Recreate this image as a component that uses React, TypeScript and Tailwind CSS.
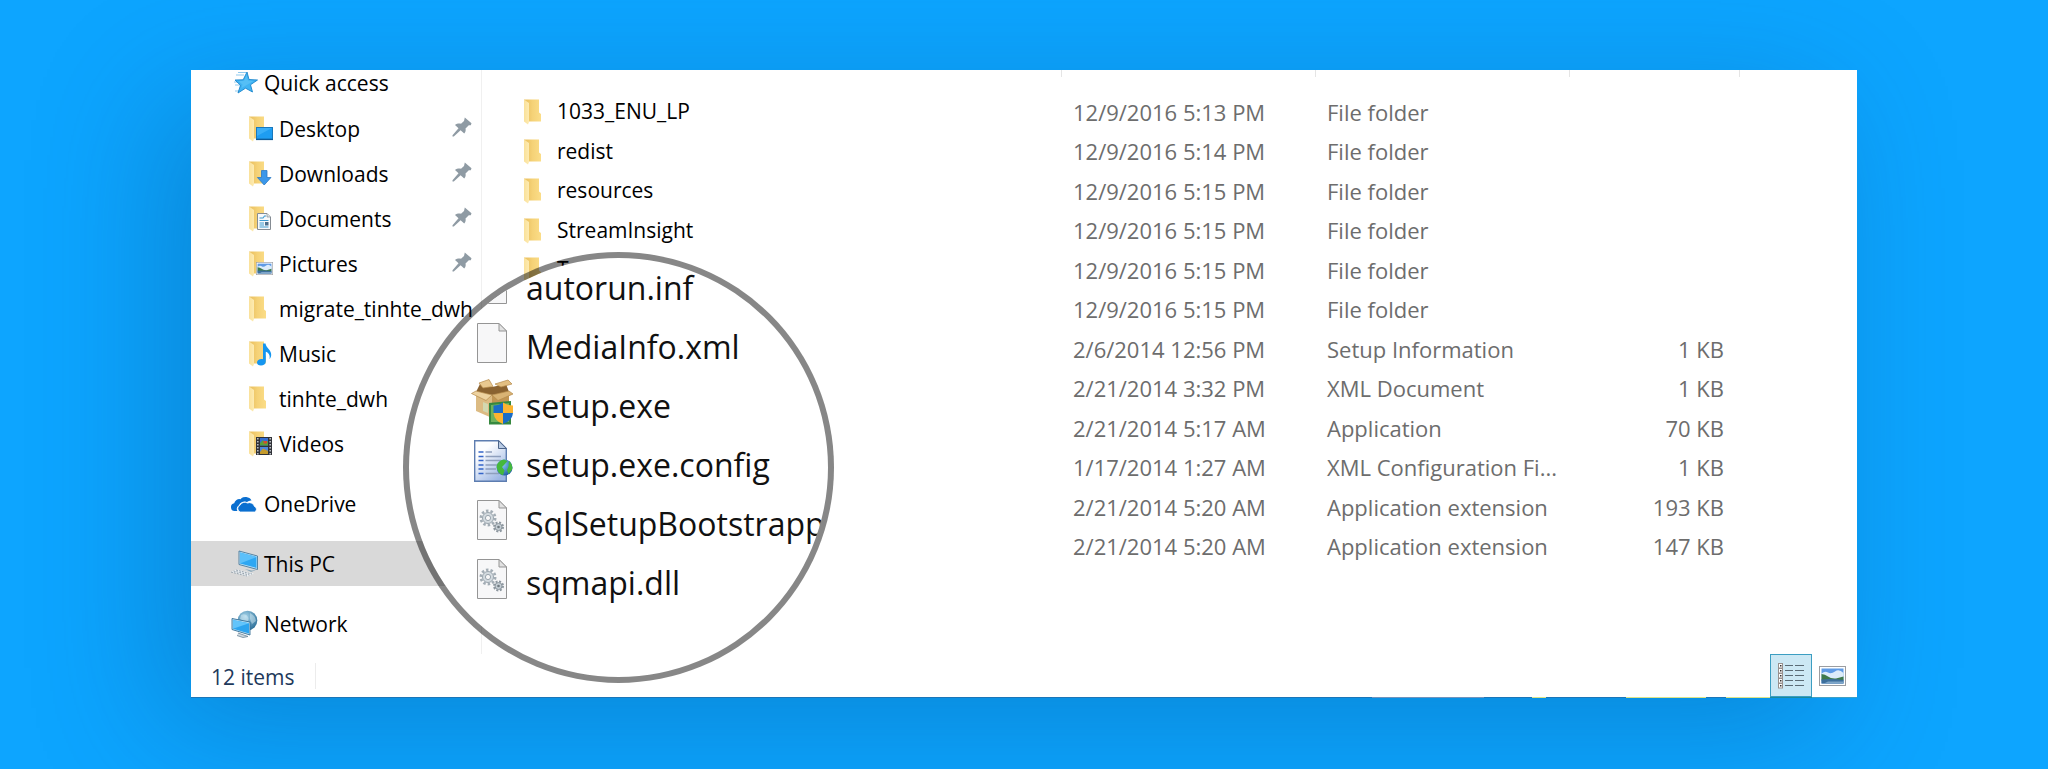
import type { ReactNode } from "react";

/* ---------- Icons ---------- */

function Folder({ children }: { children?: ReactNode }) {
  return (
    <svg viewBox="0 0 24 26" className="h-[26px] w-6 shrink-0" aria-hidden="true">
      <defs>
        <linearGradient id="folderBack" x1="0" x2="1">
          <stop offset="0.2" stopColor="#edc566" />
          <stop offset="0.5" stopColor="#f5d277" />
          <stop offset="1" stopColor="#fbdd88" />
        </linearGradient>
        <linearGradient id="folderFlap" x1="0" x2="1">
          <stop offset="0" stopColor="#fae19a" />
          <stop offset="1" stopColor="#fdebb2" />
        </linearGradient>
      </defs>
      <path d="M0 0.5H15V13.5L17 15V22.5H4Z" fill="url(#folderBack)" />
      <path d="M0 0.5L5 4V23L4 25.5L0 22.5Z" fill="url(#folderFlap)" />
      {children}
    </svg>
  );
}

const DesktopIcon = () => (
  <Folder>
    <rect x="7.5" y="11.5" width="16" height="11.5" fill="#1e9df2" stroke="#1878bd" />
    <path d="M8 12H23L8 20Z" fill="#4bb9fb" opacity="0.6" />
    <path d="M7 23.5H24" stroke="#0d5c9b" strokeWidth="1.2" />
  </Folder>
);

const DownloadsIcon = () => (
  <Folder>
    <path d="M12.5 9.500H18V16.5H22L15.2 24L8.4 16.5H12.5Z" fill="#3b97ea" stroke="#2b79c4" strokeWidth="0.8" />
  </Folder>
);

const DocumentsIcon = () => (
  <Folder>
    <path d="M8.5 7.5H18L21.5 11V23.5H8.5Z" fill="#f7f9fb" stroke="#858c93" />
    <path d="M18 7.5V11H21.5" fill="#dfe4e8" stroke="#858c93" strokeWidth="0.7" />
    <path d="M10.500 12H14L15.500 10H17M10.500 14.500H19.500M10.500 17H15M10.500 19H15M10.500 21H19.500" stroke="#3f9bd0" strokeWidth="1.1" fill="none" />
    <rect x="16" y="16" width="3.500" height="3.500" fill="#4c6f8c" />
  </Folder>
);

const Landscape = () => (
  <>
    <rect x="0.5" y="0.5" width="26" height="19" fill="#fff" stroke="#9b9da1" />
    <rect x="2.5" y="2.5" width="22" height="15" fill="#5f9be6" />
    <path d="M2.500 7.500Q6 4.500 9 6.500T16 5.500T24.500 7V13H2.500Z" fill="#dcecfa" />
    <path d="M2.500 8Q6 8 9 10.500T17 12.500L24.500 10.500V14.500H2.500Z" fill="#3f7a4c" />
    <path d="M2.500 13.500Q12 12.500 24.500 14V17.500H2.500Z" fill="#3d6f9c" />
    <path d="M9 15.500H24.500V17.500H5Z" fill="#7fa6c8" />
  </>
);

const PicturesIcon = () => (
  <Folder>
    <svg x="7" y="11" width="17" height="13" viewBox="0 0 27 20" preserveAspectRatio="none">
      <Landscape />
    </svg>
  </Folder>
);

const MusicIcon = () => (
  <Folder>
    <path
      d="M14 2.500H16.500C17 7 22.500 9 22.200 14C22.100 16 21.200 17.500 20.500 18C21.500 13.500 19 11.500 16.800 10.800V20.500C16.800 23 14.500 24.500 12 24.500C9.500 24.500 8 23.300 8 21.500C8 19.400 10.200 18 12.500 18C13.100 18 13.600 18.100 14 18.200Z"
      fill="#1596f0"
    />
  </Folder>
);

const VideosIcon = () => (
  <Folder>
    <rect x="7" y="6" width="16" height="18" fill="#303238" />
    <path d="M8.800 7V24M21.200 7V24" stroke="#b9bdc4" strokeWidth="1.600" strokeDasharray="1.500 1.500" />
    <rect x="11" y="7" width="8" height="7.500" fill="#376fd0" />
    <path d="M11 12L14 9L16 12L19 10V14.500H11Z" fill="#58a13a" />
    <rect x="14.500" y="10" width="3.500" height="2.500" fill="#d64c2c" />
    <rect x="11" y="16" width="8" height="7" fill="#4d86dd" />
    <path d="M11 21L14 17.500L19 20V23H11Z" fill="#c59b2c" />
  </Folder>
);

const Pin = () => (
  <svg viewBox="0 0 20 20" className="mb-1 size-5" aria-hidden="true">
    <path
      d="M12.800 0.500L19.500 6.300L18.800 8.200L16.800 8.200L13.500 11.500C14 13.500 13.500 15.200 12.200 16.600L8.600 13.300L1.800 19.500H0.500V18.200L6.500 11.200L3 8C4.800 6.500 7 6.200 9 6.700L12 4Z"
      fill="#8f9ba4"
    />
  </svg>
);

const StarIcon = () => (
  <svg viewBox="0 0 28 26" className="h-[26px] w-7 shrink-0" aria-hidden="true">
    <path d="M8 2.500H16M6 5H14M4 12H10M5 15H12M5 21H9" stroke="#8fc9ee" strokeWidth="1.100" />
    <path
      d="M17 2L19 9.500L27.500 10L20.500 14.800L22.500 22L15.500 18.200L8 23L10.500 15.300L5 10L13.200 9.800Z"
      fill="#3fb3f3"
      stroke="#1c86cc"
      strokeWidth="0.900"
    />
    <path d="M16.500 5L18 10.500L23.500 11L15 16L11.500 18L12.500 14.500L8.500 11.200L14 10.800Z" fill="#6bcbfa" opacity="0.500" />
  </svg>
);

const OneDriveIcon = () => (
  <svg viewBox="0 0 28 20" className="h-5 w-7 shrink-0" aria-hidden="true">
    <path
      d="M7.500 17H4.500A3.800 3.800 0 0 1 1 13.200A3.900 3.900 0 0 1 4.200 9.300A5.200 5.200 0 0 1 10.500 5.200A6.700 6.700 0 0 1 21.500 6.500A6 6 0 0 0 17 8A6.200 6.200 0 0 0 8.700 11.600A4 4 0 0 0 7.500 17Z"
      fill="#0a6fd0"
    />
    <path
      d="M10.500 18A3.500 3.500 0 0 1 10 11.300A5.300 5.300 0 0 1 17.500 9A5.300 5.300 0 0 1 24.500 12.500A2.900 2.900 0 0 1 24.500 18Z"
      fill="#0a6fd0"
      stroke="#fff"
      strokeWidth="0.800"
    />
  </svg>
);

const PcIcon = () => (
  <svg viewBox="0 0 28 28" className="size-7 shrink-0" aria-hidden="true">
    <path d="M9 1L27.500 6V19.500L9 14.500Z" fill="#bfe3f8" stroke="#48799b" strokeWidth="0.900" />
    <path d="M10 2.500L26.500 7V18L10 13.500Z" fill="#2ea7f2" />
    <path d="M10 2.500L26.500 7L10 13.500Z" fill="#5cc0fa" />
    <path d="M15 19L22 20.500L27 19.500L21 22Z" fill="#8faabb" />
    <path d="M7 19.500L24 23.500L17 26.500L0.500 21.800Z" fill="#eef2f5" />
    <path d="M6 20L22 24M3.500 21L19.500 25M1 22L17 26" stroke="#8c9aa5" strokeWidth="0.900" strokeDasharray="2 1" />
  </svg>
);

const NetworkIcon = () => (
  <svg viewBox="0 0 28 28" className="size-7 shrink-0" aria-hidden="true">
    <defs>
      <radialGradient id="globe" cx="0.400" cy="0.300" r="0.800">
        <stop offset="0" stopColor="#a5d4ea" />
        <stop offset="1" stopColor="#1f6490" />
      </radialGradient>
    </defs>
    <circle cx="17.500" cy="10.500" r="9.800" fill="url(#globe)" />
    <path d="M11 5Q16 3 18 7T15 12L10 9ZM20 3Q26 6 26 11L22 14L20 9Z" fill="#e1f2f8" opacity="0.450" />
    <path d="M2 8.500L20 12V25L2 19.500Z" fill="#b7dff5" stroke="#356f97" strokeWidth="0.900" />
    <path d="M3 10L19 13.200V23.500L3 18.700Z" fill="#2ca4ef" />
    <path d="M3 10L19 13.200L3 18.700Z" fill="#62c4fb" />
    <path d="M8 23L18 26.500L13 27.500L7 25.500" fill="#ced8df" stroke="#6d8798" strokeWidth="0.800" />
  </svg>
);

const PageShape = () => (
  <>
    <path d="M6.500 0.500H28L35.500 8V39.500H6.500Z" fill="#f7f7f8" stroke="#959595" />
    <path d="M28 0.500V8H35.500Z" fill="#e2e2e2" stroke="#959595" />
  </>
);

const PageIcon = () => (
  <svg viewBox="0 0 42 40" className="h-10 w-[42px] shrink-0" aria-hidden="true">
    <PageShape />
  </svg>
);

const GearsIcon = () => (
  <svg viewBox="0 0 42 40" className="h-10 w-[42px] shrink-0" aria-hidden="true">
    <PageShape />
    <circle cx="17" cy="18" r="7.200" fill="none" stroke="#a3adb5" strokeWidth="2.600" strokeDasharray="2.500 2.025" />
    <circle cx="17" cy="18" r="5.500" fill="#d3dadf" stroke="#9aa5ae" />
    <circle cx="17" cy="18" r="2.600" fill="#f7f7f8" stroke="#9aa5ae" />
    <circle cx="27.500" cy="27" r="4.500" fill="none" stroke="#8d979f" strokeWidth="2" strokeDasharray="2 1.534" />
    <circle cx="27.500" cy="27" r="3.500" fill="#c3ccd2" stroke="#8d979f" />
    <circle cx="27.500" cy="27" r="1.300" fill="#6f7980" />
  </svg>
);

const ConfigIcon = () => (
  <svg viewBox="0 0 42 42" className="h-[42px] w-[42px] shrink-0" aria-hidden="true">
    <defs>
      <linearGradient id="configPage" x1="0" y1="0" x2="0.700" y2="1">
        <stop offset="0.300" stopColor="#fdfeff" />
        <stop offset="1" stopColor="#9cb6e4" />
      </linearGradient>
      <radialGradient id="earth" cx="0.350" cy="0.300" r="0.800">
        <stop offset="0" stopColor="#8fd0f5" />
        <stop offset="1" stopColor="#17529f" />
      </radialGradient>
    </defs>
    <path d="M3.700 0.700H27.500L35.300 8.500V41.300H3.700Z" fill="url(#configPage)" stroke="#5d7db0" strokeWidth="1.400" />
    <path d="M27.500 0.700V8.500H35.300Z" fill="#b9cbe4" stroke="#4c6488" />
    <path d="M7.500 12H12.500M7.500 16.500H12.500M7.500 20.500H12.500M7.500 25H12.500M7.500 29H12.500M7.500 33.500H12.500" stroke="#3465c9" strokeWidth="1.700" />
    <path d="M14.500 12H21M14.500 16.500H30M14.500 20.500H30M14.500 25H28M14.500 29H25M14.500 33.500H28" stroke="#8e9fbd" strokeWidth="1.300" />
    <circle cx="33.500" cy="27.500" r="8" fill="url(#earth)" />
    <path d="M25.600 26Q27 20.500 33 19.500L36.500 21L33 25L31 27L33.500 30.500L32 35.300Q26 33.500 25.600 26ZM38 21Q41.500 24 41.400 29L37.500 34L36 30L37.500 26.500Z" fill="#45b83c" />
  </svg>
);

const SetupIcon = () => (
  <svg viewBox="0 0 42 46" className="h-[46px] w-[42px] shrink-0" aria-hidden="true">
    <defs>
      <clipPath id="shield">
        <path d="M32 23.500Q36.500 26.500 42 26.500V34Q41 42 32 45Q23.500 42 22.500 34V26.500Q28 26.500 32 23.500Z" />
      </clipPath>
    </defs>
    <path d="M5 13L21 16V39L5 32Z" fill="#dcbb83" />
    <path d="M21 16L38 13V33L21 39Z" fill="#c19553" />
    <path d="M9 5L21 8L35 5L38 13L21 16L5 13Z" fill="#8a6230" />
    <path d="M8 4L18 0.500L22 7.500L12 9Z" fill="#e8c890" stroke="#b58a4b" strokeWidth="0.700" />
    <path d="M24 5L37 1L41 5L30 8Z" fill="#e3bf82" stroke="#b58a4b" strokeWidth="0.700" />
    <path d="M5 12L0.500 14.500L15 21.500L21 16Z" fill="#edd2a0" stroke="#b58a4b" strokeWidth="0.700" />
    <path d="M21 16L38 12L42 15L27 21.500Z" fill="#d9b374" stroke="#b58a4b" strokeWidth="0.700" />
    <path d="M12 23L17 25V34L12 32Z" fill="#d3d8b0" />
    <path d="M18 24L40 22V45.500H18Z" fill="#36883f" />
    <path d="M20 26L38 24V43H20Z" fill="#6fb25c" />
    <g clipPath="url(#shield)">
      <rect x="22" y="23" width="10" height="11" fill="#1b6dc7" />
      <rect x="32" y="23" width="10" height="11" fill="#fcb431" />
      <rect x="22" y="34" width="10" height="12" fill="#fcb431" />
      <rect x="32" y="34" width="10" height="12" fill="#1b6dc7" />
    </g>
  </svg>
);

const DetailsIcon = () => (
  <svg viewBox="0 0 28 26" className="h-[26px] w-7" aria-hidden="true">
    {[0, 5, 10, 15, 20].map((y) => (
      <g key={y}>
        <rect x="1.500" y={y + 0.500} width="4" height="4.500" fill="#fff" stroke="#98908d" />
        <rect x="3" y={y + 2} width="1.500" height="1.500" fill="#342e2e" />
        <path d={`M8 ${y + 2.500}H16M18 ${y + 2.500}H27`} stroke="#5b6b75" strokeWidth="1.200" />
      </g>
    ))}
  </svg>
);

/* ---------- Data ---------- */

const quickAccess = [
  { name: "Desktop", icon: <DesktopIcon />, pinned: true },
  { name: "Downloads", icon: <DownloadsIcon />, pinned: true },
  { name: "Documents", icon: <DocumentsIcon />, pinned: true },
  { name: "Pictures", icon: <PicturesIcon />, pinned: true },
  { name: "migrate_tinhte_dwh", icon: <Folder />, pinned: false },
  { name: "Music", icon: <MusicIcon />, pinned: false },
  { name: "tinhte_dwh", icon: <Folder />, pinned: false },
  { name: "Videos", icon: <VideosIcon />, pinned: false },
];

const roots = [
  { name: "OneDrive", icon: <OneDriveIcon />, selected: false },
  { name: "This PC", icon: <PcIcon />, selected: true },
  { name: "Network", icon: <NetworkIcon />, selected: false },
];

const files = [
  ["1033_ENU_LP", "12/9/2016 5:13 PM", "File folder", ""],
  ["redist", "12/9/2016 5:14 PM", "File folder", ""],
  ["resources", "12/9/2016 5:15 PM", "File folder", ""],
  ["StreamInsight", "12/9/2016 5:15 PM", "File folder", ""],
  ["Tools", "12/9/2016 5:15 PM", "File folder", ""],
  ["", "12/9/2016 5:15 PM", "File folder", ""],
  ["", "2/6/2014 12:56 PM", "Setup Information", "1 KB"],
  ["", "2/21/2014 3:32 PM", "XML Document", "1 KB"],
  ["", "2/21/2014 5:17 AM", "Application", "70 KB"],
  ["", "1/17/2014 1:27 AM", "XML Configuration Fi...", "1 KB"],
  ["", "2/21/2014 5:20 AM", "Application extension", "193 KB"],
  ["", "2/21/2014 5:20 AM", "Application extension", "147 KB"],
];

const magnified = [
  { name: "autorun.inf", icon: <PageIcon /> },
  { name: "MediaInfo.xml", icon: <PageIcon /> },
  { name: "setup.exe", icon: <SetupIcon /> },
  { name: "setup.exe.config", icon: <ConfigIcon /> },
  { name: "SqlSetupBootstrapper.dll", icon: <GearsIcon /> },
  { name: "sqmapi.dll", icon: <GearsIcon /> },
];

/* ---------- Sections ---------- */

function Sidebar() {
  return (
    <nav className="w-[291px] shrink-0 border-r border-[#f0f0f0] pb-2 whitespace-nowrap">
      <a href="#quick" className="flex h-9 items-start gap-1.5 pl-[39px] leading-[26px]">
        <StarIcon />
        Quick access
      </a>
      <ul>
        {quickAccess.map((item) => (
          <li key={item.name} className="flex h-[45px] items-center justify-between pr-[9px] pl-[58px]">
            <a href={`#${item.name}`} className="flex items-center gap-1.5">
              {item.icon}
              <span className="pt-0.5">{item.name}</span>
            </a>
            {item.pinned && <Pin />}
          </li>
        ))}
      </ul>
      <ul className="mt-[15px] flex flex-col gap-[15px]">
        {roots.map((item) => (
          <li key={item.name} className={item.selected ? "bg-[#d9d9d9]" : ""}>
            <a href={`#${item.name}`} className="flex h-[45px] items-center gap-1.5 pl-[39px]">
              {item.icon}
              <span className="pt-[3px]">{item.name}</span>
            </a>
          </li>
        ))}
      </ul>
    </nav>
  );
}

function FileTable() {
  return (
    <div className="min-w-0 flex-1">
      <table className="w-full table-fixed border-collapse text-left text-[22px] whitespace-nowrap text-[#6d6d6d]">
        <thead>
          <tr className="h-[22px] align-top">
            <th aria-label="Name" className="p-0"><div className="h-[7px] border-r border-[#e5e5e5]" /></th>
            <th aria-label="Date modified" className="w-[254px] p-0"><div className="h-[7px] border-r border-[#e5e5e5]" /></th>
            <th aria-label="Type" className="w-[254px] p-0"><div className="h-[7px] border-r border-[#e5e5e5]" /></th>
            <th aria-label="Size" className="w-[170px] p-0"><div className="h-[7px] border-r border-[#e5e5e5]" /></th>
            <td className="w-[117px] p-0" />
          </tr>
        </thead>
        <tbody>
          {files.map(([name, date, type, size], i) => (
            <tr key={i} className="odd:h-10 even:h-[39px]">
              <td className="p-0 pl-[42px] text-[21px] text-black">
                {name && (
                  <div className="flex items-center gap-[9px]">
                    <Folder />
                    {name}
                  </div>
                )}
              </td>
              <td className="p-0 pl-[11px]">{date}</td>
              <td className="p-0 pl-[11px]">{type}</td>
              <td className="p-0 pr-4 text-right">{size}</td>
              <td className="p-0" />
            </tr>
          ))}
        </tbody>
      </table>
    </div>
  );
}

function Lens() {
  return (
    <div className="absolute top-[182px] left-[212px] size-[431px] overflow-hidden rounded-full border-6 border-black/47 bg-white bg-clip-padding">
      <ul className="flex flex-col gap-[19px] pt-1.5 pl-[62px] text-[32px] leading-10 whitespace-nowrap text-[#111]">
        {magnified.map((item) => (
          <li key={item.name} className="flex h-10 items-center gap-[13px]">
            {item.icon}
            <span className="pt-2">{item.name}</span>
          </li>
        ))}
      </ul>
    </div>
  );
}

function StatusBar() {
  return (
    <footer className="flex h-[43px] items-center justify-between pl-5">
      <span className="border-r border-[#ececec] pt-0.5 pr-5 leading-6 text-[#1e395b]">12 items</span>
      <div className="flex h-full items-stretch">
        <button
          type="button"
          aria-label="Details"
          className="flex w-[42px] items-center justify-center border border-[#3c9ec2] bg-[#cce8f4]"
        >
          <DetailsIcon />
        </button>
        <button type="button" aria-label="Large thumbnails" className="flex w-[45px] items-center justify-center pr-1">
          <svg viewBox="0 0 27 20" className="h-5 w-[27px]" aria-hidden="true">
            <Landscape />
          </svg>
        </button>
      </div>
    </footer>
  );
}

/* Thin sliver of the desktop that shows under the window's lower edge. */
function BottomEdge() {
  return (
    <div className="flex h-px justify-end bg-[#1b76b8]" aria-hidden="true">
      <span className="w-28 bg-[#6f93bd]" />
      <span className="w-12" />
      <span className="w-3.5 bg-[#d9e48a]" />
      <span className="w-20" />
      <span className="w-20 bg-[#d9e48a]" />
      <span className="w-5" />
      <span className="w-11 bg-[#d9e48a]" />
      <span className="w-[42px] bg-[#1a8a9c]" />
      <span className="w-[45px] bg-[#3e9fc4]" />
    </div>
  );
}

export default function App() {
  return (
    <div className="min-h-screen overflow-hidden bg-[#0da5ff] px-[191px] pt-[70px] pb-[71px] font-['Open_Sans','Noto_Sans',sans-serif] text-[21px] text-black">
      <main className="relative bg-white shadow-[-30px_30px_120px_rgba(0,60,110,0.28)]">
        <div className="flex">
          <Sidebar />
          <FileTable />
        </div>
        <StatusBar />
        <BottomEdge />
        <Lens />
      </main>
    </div>
  );
}
